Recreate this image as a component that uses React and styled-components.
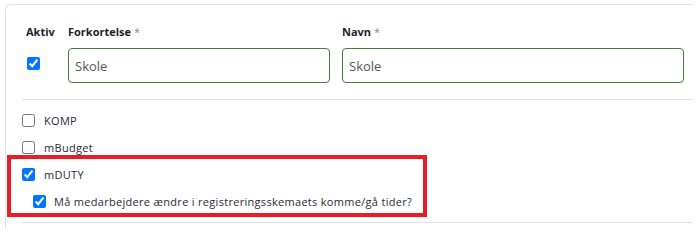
import React from 'react'
import styled, { createGlobalStyle } from 'styled-components'

const GlobalStyle = createGlobalStyle`
	body {
		margin: 0;
		background: #ffffff;
		font-family: 'Open Sans', 'Liberation Sans', sans-serif;
	}
`

const Card = styled.div`
	position: relative;
	box-sizing: border-box;
	margin: 4px 0 0 5px;
	width: 687px;
	height: 225px;
	padding: 19px 0 0 16px;
	border-top: 1px solid #e2e2e2;
	border-left: 1px solid #e2e2e2;
	border-top-left-radius: 6px;
`

const FieldGrid = styled.div`
	display: grid;
	grid-template-columns: 34px 262px 342px;
	grid-template-rows: 16px 35px;
	column-gap: 12px;
	row-gap: 8px;
	padding-bottom: 16px;
	border-bottom: 1px solid #e2e2e2;
`

const Label = styled.div`
	font-size: 11px;
	font-weight: 700;
	line-height: 16px;
	color: #1e1e2a;
	padding-left: ${(p) => p.$indent || 0}px;
	white-space: nowrap;
`

const Star = styled.span`
	font-weight: 400;
	color: #8a8a8a;
`

const CheckCell = styled.div`
	padding: 5px 0 0 5px;
`

const Box = styled.input.attrs({ type: 'checkbox' })`
	width: 13px;
	height: 13px;
	margin: 0;
	flex: none;
	accent-color: #0075ff;
`

const TextInput = styled.input`
	box-sizing: border-box;
	height: 35px;
	width: 100%;
	margin: 0;
	padding: 0 6px;
	border: 1px solid #467a3c;
	border-radius: 4px;
	font-family: inherit;
	font-size: 13px;
	color: #555555;
	outline: none;
`

const List = styled.div`
	padding: 7px 0 7px;
	border-bottom: 1px solid #e2e2e2;
`

const Row = styled.label`
	display: flex;
	align-items: center;
	height: 27px;
	padding-left: ${(p) => p.$indent || 0}px;
	gap: ${(p) => p.$gap || 9}px;
	font-size: 11px;
	letter-spacing: 0.3px;
	color: #2a2a36;
	white-space: nowrap;
`

const Highlight = styled.div`
	position: absolute;
	left: 1px;
	top: 150px;
	width: 420px;
	height: 62px;
	box-sizing: border-box;
	border: 4px solid #ec1c24;
	pointer-events: none;
`

const modules = [
	{ name: 'KOMP', checked: false },
	{ name: 'mBudget', checked: false },
	{ name: 'mDUTY', checked: true },
]

export default function App() {
	return (
		<>
			<GlobalStyle />
			<Card>
				<FieldGrid>
					<Label $indent={4}>Aktiv</Label>
					<Label>
						Forkortelse <Star>*</Star>
					</Label>
					<Label>
						Navn <Star>*</Star>
					</Label>
					<CheckCell>
						<Box defaultChecked />
					</CheckCell>
					<TextInput defaultValue='Skole' />
					<TextInput defaultValue='Skole' />
				</FieldGrid>
				<List>
					{modules.map((m) => (
						<Row key={m.name}>
							<Box defaultChecked={m.checked} />
							{m.name}
						</Row>
					))}
					<Row $indent={11} $gap={8}>
						<Box defaultChecked />
						Må medarbejdere ændre i registreringsskemaets komme/gå tider?
					</Row>
				</List>
				<Highlight />
			</Card>
		</>
	)
}
